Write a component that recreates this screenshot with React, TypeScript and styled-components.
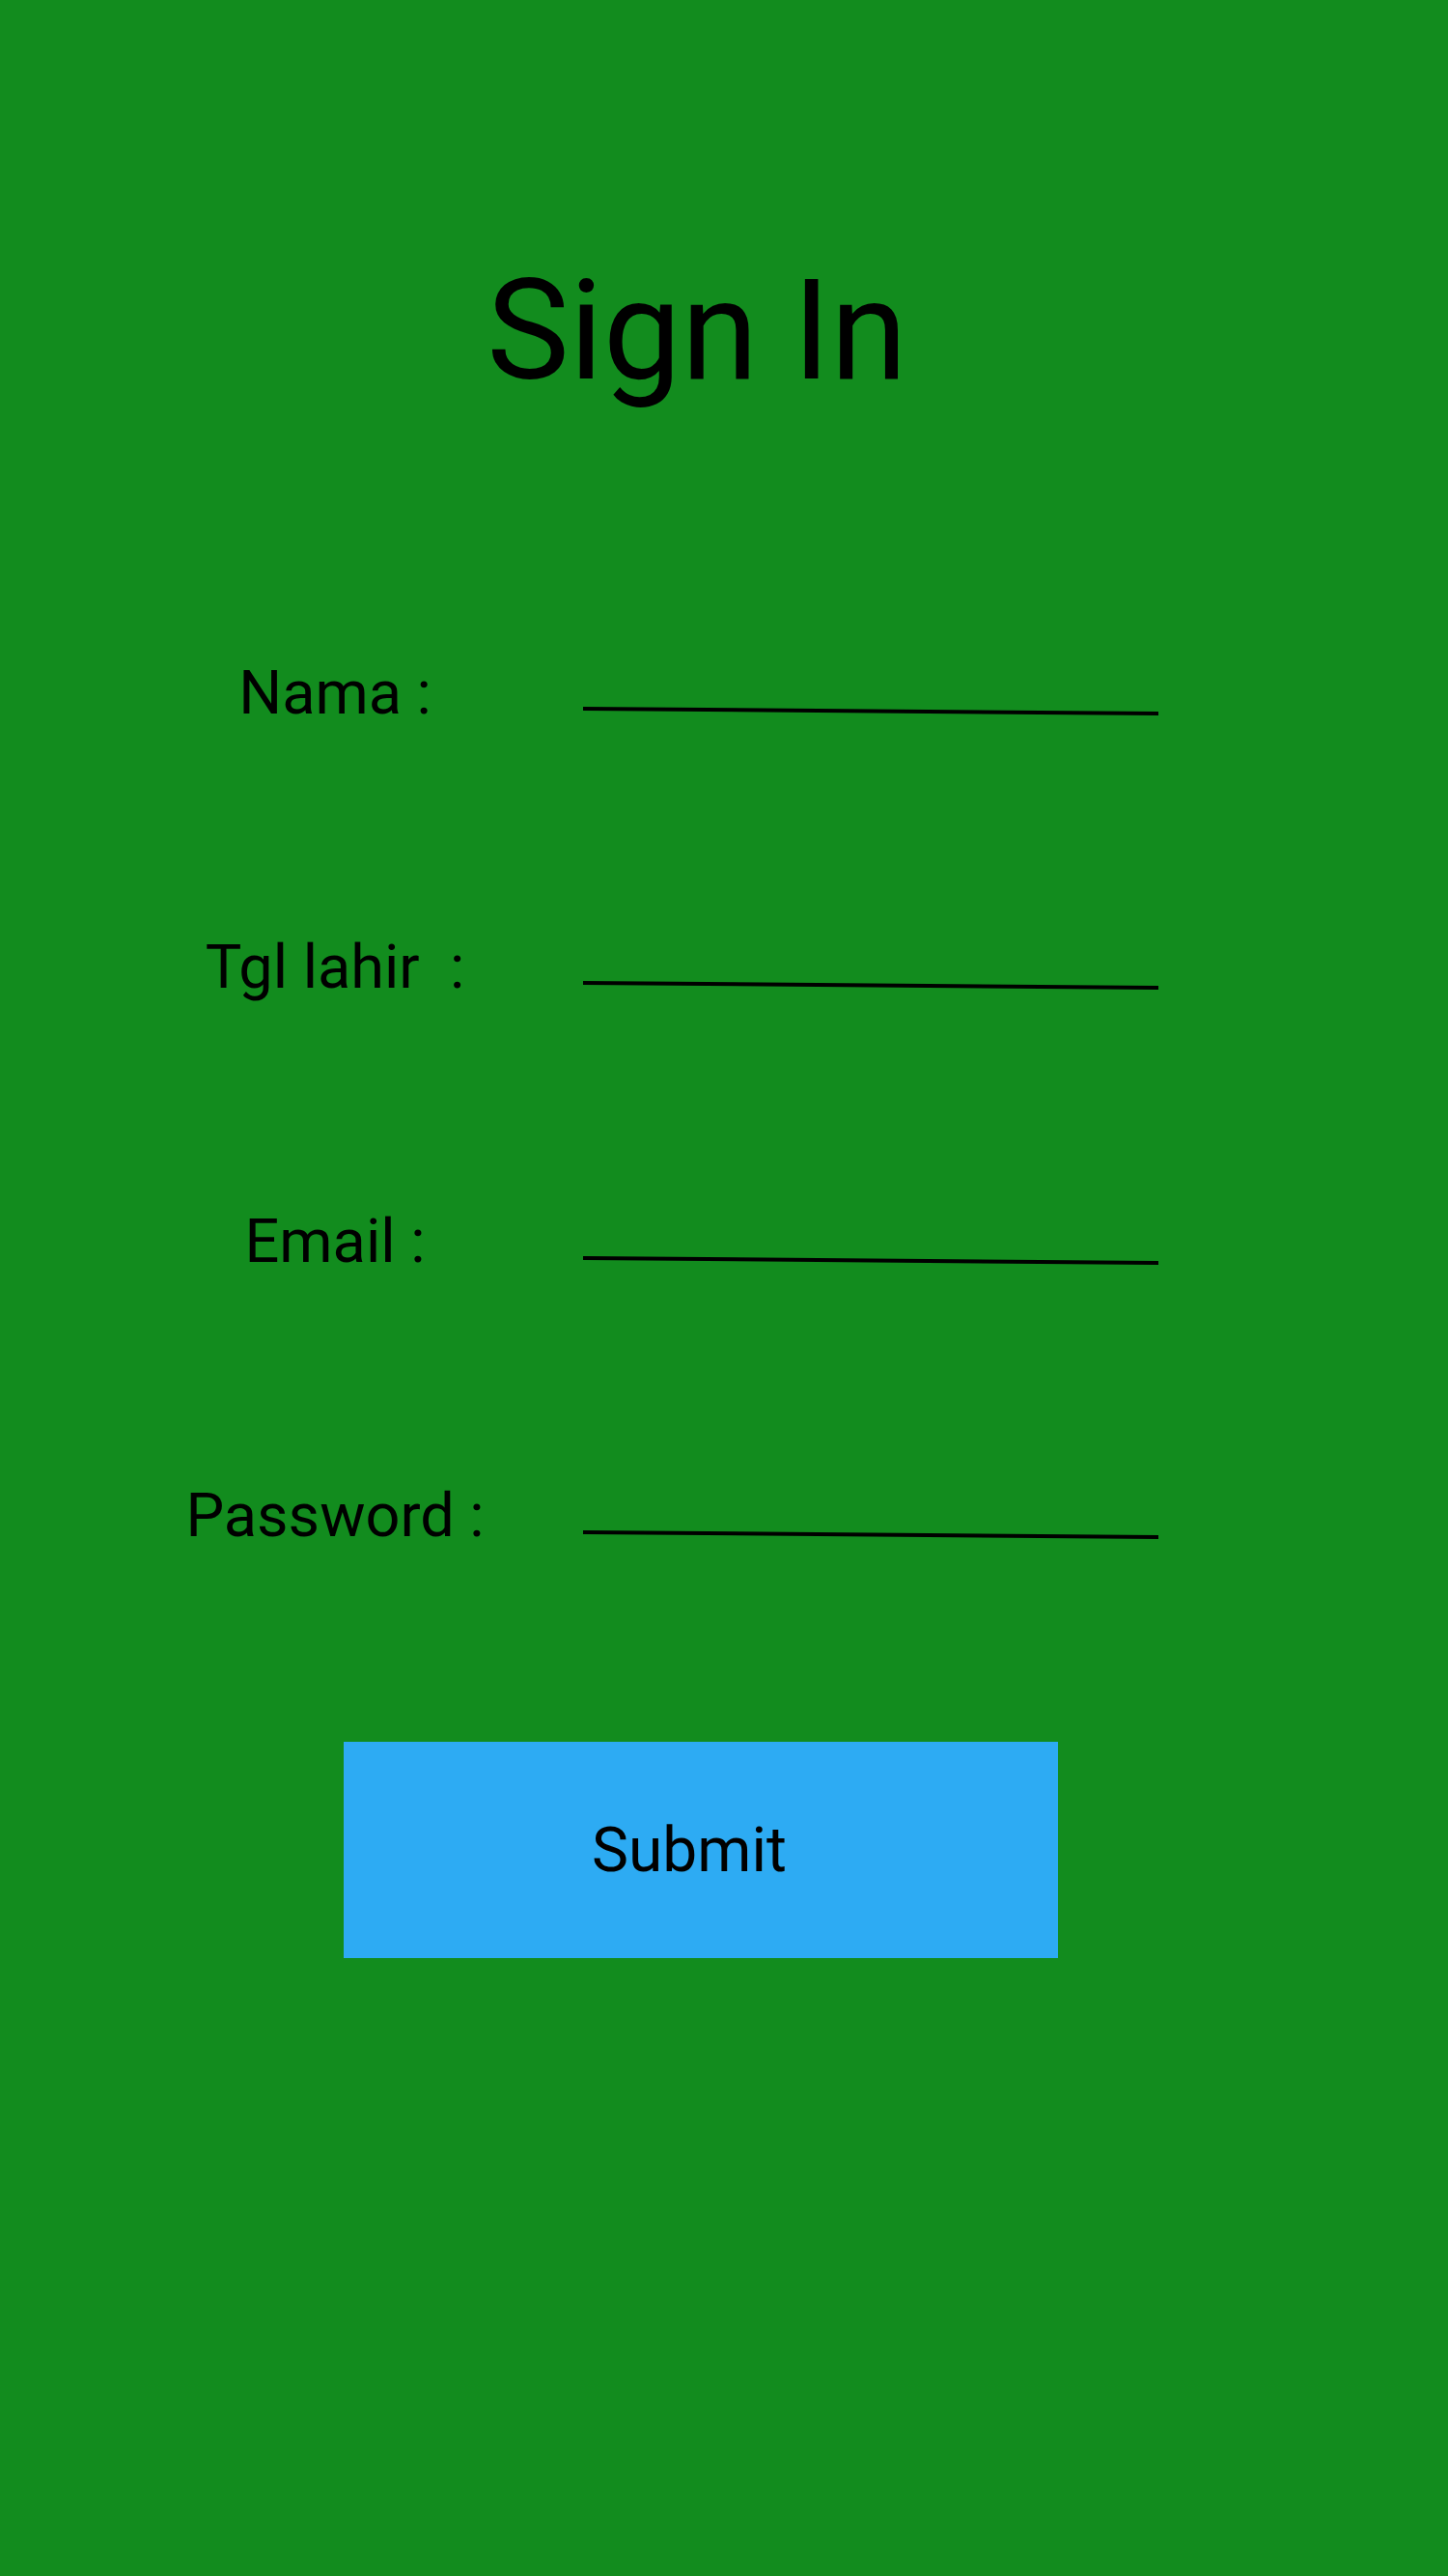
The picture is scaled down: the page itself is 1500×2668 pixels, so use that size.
import React from "react";
import styled, { createGlobalStyle } from "styled-components";

const Global = createGlobalStyle`
  html, body {
    margin: 0;
    padding: 0;
    background: #128c1e;
  }
  * { box-sizing: border-box; }
`;

const Page = styled.main`
  min-height: 2668px;
  background: #128c1e;
  display: flex;
  flex-direction: column;
  font-family: Roboto, "Liberation Sans", sans-serif;
  color: #000;
  padding-top: 259px;
`;

const Title = styled.h1`
  margin: 0;
  font-weight: 400;
  font-size: 144px;
  line-height: 168px;
  text-align: center;
  padding-right: 56px;
`;

const Form = styled.form`
  display: flex;
  flex-direction: column;
  gap: 210.3px;
  margin-top: 253.6px;
`;

const Row = styled.div`
  display: flex;
  align-items: flex-start;
  height: 74px;
`;

const Label = styled.label`
  width: 394px;
  margin-left: 150px;
  text-align: center;
  font-size: 63px;
  line-height: 74px;
  white-space: pre;
`;

const LineSvg = styled.svg`
  display: block;
  margin-left: 60px;
  margin-top: 49.6px;
  width: 596px;
  height: 12px;
`;

const Underline = () => (
  <LineSvg viewBox="0 0 596 12" aria-hidden>
    <line x1="0" y1="4" x2="596" y2="9" stroke="#000" strokeWidth="4" />
  </LineSvg>
);

const ButtonWrap = styled.div`
  display: flex;
  margin-top: 196.6px;
  padding-left: 356px;
`;

const SubmitButton = styled.button`
  width: 740px;
  height: 224px;
  border: none;
  border-radius: 0;
  background: #2dabf3;
  color: #000;
  font-family: Roboto, "Liberation Sans", sans-serif;
  font-size: 64px;
  padding: 0 24px 0 0;
  cursor: pointer;
`;

const fields = ["Nama :", "Tgl lahir  :", "Email :", "Password :"];

export default function App() {
  return (
    <>
      <Global />
      <Page>
        <Title>Sign In</Title>
        <Form onSubmit={(e) => e.preventDefault()}>
          {fields.map((f) => (
            <Row key={f}>
              <Label>{f}</Label>
              <Underline />
            </Row>
          ))}
        </Form>
        <ButtonWrap>
          <SubmitButton type="submit">Submit</SubmitButton>
        </ButtonWrap>
      </Page>
    </>
  );
}
